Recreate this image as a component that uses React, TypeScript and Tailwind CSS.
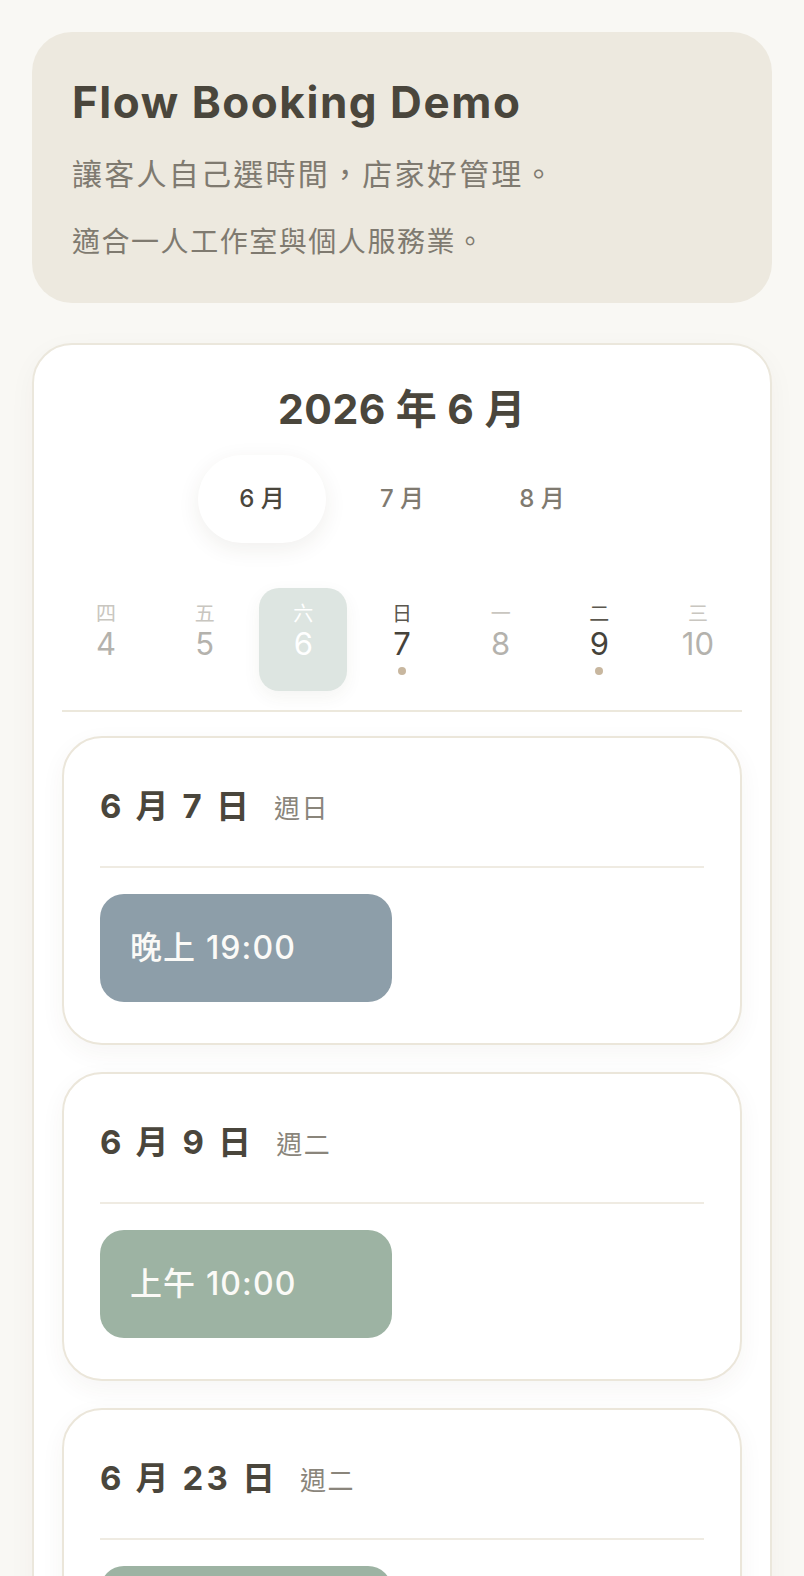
import React from 'react';

const days = [
  { w: '四', d: 4, state: 'off' },
  { w: '五', d: 5, state: 'off' },
  { w: '六', d: 6, state: 'selected' },
  { w: '日', d: 7, state: 'open' },
  { w: '一', d: 8, state: 'off' },
  { w: '二', d: 9, state: 'open' },
  { w: '三', d: 10, state: 'off' },
];

const slots = [
  { title: '6 月 7 日', week: '週日', time: '晚上 19:00', tone: 'slate' },
  { title: '6 月 9 日', week: '週二', time: '上午 10:00', tone: 'sage' },
  { title: '6 月 23 日', week: '週二', time: '上午 10:00', tone: 'sage' },
];

function DayCell({ w, d, state }: { w: string; d: number; state: string }) {
  const selected = state === 'selected';
  const open = state === 'open';
  return (
    <div
      className={`w-[88px] h-[103px] rounded-[20px] flex flex-col items-center pt-[13px] ${
        selected ? 'bg-[#dde5e1] shadow-[0_6px_18px_rgba(60,60,40,0.06)]' : ''
      }`}
    >
      <span
        className={`text-[20px] leading-[26px] ${
          selected ? 'text-white' : open ? 'text-[#5b574e]' : 'text-[#c9c6c0]'
        }`}
      >
        {w}
      </span>
      <span
        className={`text-[31px] leading-[34px] ${
          selected ? 'text-white' : open ? 'text-[#45423a]' : 'text-[#b4b2ad]'
        }`}
      >
        {d}
      </span>
      {open && <span className="mt-[6px] size-[8px] rounded-full bg-[#c8b79f]" />}
    </div>
  );
}

function SlotCard({ title, week, time, tone }: { title: string; week: string; time: string; tone: string }) {
  return (
    <div className="rounded-[40px] border-2 border-[#ebe6da] bg-white px-[36px] pt-[38px] pb-[41px] shadow-[0_8px_24px_rgba(70,60,30,0.05)]">
      <div className="flex items-baseline gap-[22px] pb-[30px] border-b-2 border-[#efebe2]">
        <span className="text-[33px] leading-[60px] font-bold tracking-[0.095em] text-[#4a463c]">{title}</span>
        <span className="text-[26px] tracking-[0.06em] text-[#8a857b]">{week}</span>
      </div>
      <button
        className={`mt-[26px] flex h-[108px] w-[292px] items-center rounded-[24px] pl-[30px] text-[32px] font-medium tracking-[0.035em] text-[#fbfaf7] ${
          tone === 'slate' ? 'bg-[#8d9ea9]' : 'bg-[#9db3a3]'
        }`}
      >
        {time}
      </button>
    </div>
  );
}

export default function App() {
  return (
    <div
      className="min-h-screen bg-[#f9f8f4] px-[32px] pt-[32px] pb-[40px]"
      style={{ fontFamily: 'Inter, "Noto Sans CJK TC", sans-serif' }}
    >
      <div className="rounded-[40px] bg-[#ede9df] p-[40px]">
        <h1 className="text-[44px] leading-[60px] font-bold tracking-[0.035em] text-[#4a463c]">Flow Booking Demo</h1>
        <p className="mt-[20px] text-[30px] leading-[45px] tracking-[0.075em] text-[#7f7a70]">
          讓客人自己選時間，店家好管理。
        </p>
        <p className="mt-[24px] text-[28px] leading-[42px] tracking-[0.055em] text-[#7f7a70]">
          適合一人工作室與個人服務業。
        </p>
      </div>

      <div className="mt-[40px] rounded-[40px] border-2 border-[#ebe7dc] bg-white px-[28px] pt-[40px] pb-[40px] shadow-[0_8px_28px_rgba(70,60,30,0.04)]">
        <h2 className="text-center text-[41px] leading-[48px] font-bold tracking-[0.01em] text-[#4a463c]">2026 年 6 月</h2>

        <div className="mt-[22px] flex justify-center gap-[12px]">
          <div className="flex h-[88px] w-[128px] items-center justify-center rounded-full bg-white text-[24px] font-medium text-[#4a463c] shadow-[0_6px_22px_rgba(60,50,30,0.08)]">
            6 月
          </div>
          <div className="flex h-[88px] w-[128px] items-center justify-center rounded-full text-[24px] font-medium text-[#7f7a70]">
            7 月
          </div>
          <div className="flex h-[88px] w-[128px] items-center justify-center rounded-full text-[24px] font-medium text-[#7f7a70]">
            8 月
          </div>
        </div>

        <div className="mt-[45px] flex justify-between pb-[19px] border-b-2 border-[#ece8dc]">
          {days.map((day) => (
            <DayCell key={day.d} {...day} />
          ))}
        </div>

        <div className="mt-[24px] flex flex-col gap-[27px]">
          {slots.map((s) => (
            <SlotCard key={s.title} {...s} />
          ))}
        </div>
      </div>
    </div>
  );
}
